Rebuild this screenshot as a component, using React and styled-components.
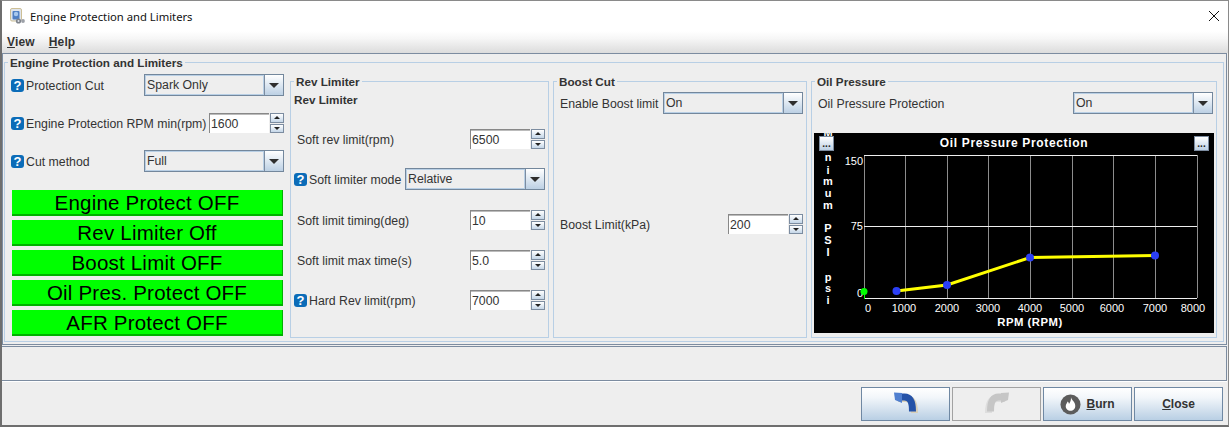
import React from "react";
import styled, { createGlobalStyle } from "styled-components";

const Global = createGlobalStyle`
  html, body { margin: 0; padding: 0; background: #eeeeee; }
  body { width: 1229px; height: 427px; overflow: hidden; font-family: "Liberation Sans", Arial, sans-serif; font-size: 12.3px; color: #333; }
  * { box-sizing: border-box; }
`;

const Win = styled.div`
  width: 1229px; height: 427px; display: flex; flex-direction: column;
  border-left: 2px solid #6e6e6e; border-right: 1px solid #8a8a8a; border-bottom: 2px solid #6e6e6e; border-top: 1px solid #8a8a8a;
  background: #eeeeee;
`;
const TitleBar = styled.div`
  height: 30px; flex: none; background: #fff; display: flex; align-items: center; padding: 0 9px 0 7px; gap: 5px;
`;
const TitleText = styled.span`
  font-family: "Noto Sans", "Open Sans", sans-serif; font-size: 11.25px; color: #111; flex: 1;
`;
const MenuBar = styled.div`
  height: 22px; flex: none; display: flex; align-items: center; gap: 14px; padding: 0 0 1px 5px;
  background: linear-gradient(#ffffff 0%, #f6f6f6 35%, #dcdcdc 100%);
`;
const MenuItem = styled.span`
  font-weight: 700; font-size: 12px; letter-spacing: .15px; color: #333;
  u { text-decoration: underline; }
`;
const MainPanel = styled.div`
  height: 292px; flex: none; margin-right: 1px; border: 1px solid #7c8ca0; padding: 1px 1px 0 1px;
`;
const Group = styled.fieldset`
  margin: 0 ${p => p.$gap || 0}px 0 0; padding: 0; min-width: 0; flex: none; border: 1px solid #b8cfe5; width: ${p => p.$w}px; height: ${p => p.$h}px;
`;
const Legend = styled.legend`
  margin-left: 3px; padding: 0 2px; height: 14px; font-weight: 700; font-size: 11.7px; line-height: 16px; color: #333;
`;
const Columns = styled.div`
  display: flex; padding: 5px 0 0 7px;
`;
const LeftCol = styled.div`
  width: 272px; margin-right: 6px; flex: none; display: flex; flex-direction: column;
`;
const GroupBody = styled.div`
  display: flex; flex-direction: column; padding: ${p => p.$pad};
`;
const Row = styled.div`
  display: flex; align-items: center; flex: none; height: ${p => p.$h || 22}px; margin-top: ${p => p.$top || 0}px; margin-left: ${p => p.$left || 0}px; margin-right: ${p => p.$right || 0}px;
`;
const Label = styled.span`
  flex: 1; white-space: nowrap; color: #333; line-height: 14px; padding-top: 1px;
`;
const Heading = styled.div`
  font-weight: 700; font-size: 11.7px; line-height: 14px; height: 14px; color: #333;
`;
const Help = styled.span`
  width: 13px; height: 13px; flex: none; margin: 0 2px 0 -1px; border-radius: 3px; background: #0b6cb8; color: #fff; font-weight: 700; font-size: 13px; line-height: 13px; text-align: center;
`;
const Combo = styled.div`
  width: 140px; height: 22px; flex: none; display: flex; border: 1px solid #73879c; background: #eeeeee;
`;
const ComboText = styled.div`
  flex: 1; border: 1px solid #b8cfe5; padding-left: 1px; line-height: 18px; color: #333;
`;
const ComboArrow = styled.div`
  width: 19px; flex: none; border-left: 1px solid #7c8ca0; background: linear-gradient(#ffffff, #bcd0e4); display: flex; align-items: center; justify-content: center;
  &::after { content: ""; border-left: 5px solid transparent; border-right: 5px solid transparent; border-top: 5px solid #2e2e2e; }
`;
const Spinner = styled.div`
  display: flex; flex: none; height: 20px; gap: 1px;
`;
const SpinInput = styled.div`
  width: 60px; background: #fff; border-top: 1px solid #888; border-left: 1px solid #888; padding-left: 1px; line-height: 20px; color: #333;
  box-shadow: inset 0 1px 0 #bbb;
`;
const SpinButtons = styled.div`
  width: 14px; display: flex; flex-direction: column; gap: 1px;
`;
const SpinBtn = styled.div`
  flex: 1; border: 1px solid #7c8ca0; background: linear-gradient(#ffffff, #c4d6e8); display: flex; align-items: center; justify-content: center;
  &::after { content: ""; border-left: 3px solid transparent; border-right: 3px solid transparent;
    ${p => p.$up ? "border-bottom: 3px solid #222;" : "border-top: 3px solid #222;"} }
`;
const StatusButtons = styled.div`
  display: flex; flex-direction: column; gap: 4px; margin: 18px 1px 0 0;
`;
const StatusBtn = styled.div`
  height: 26px; background: #00ff00; border-bottom: 2px solid #00b000; border-right: 1px solid #00b000; color: #000; font-size: 20.5px; letter-spacing: .2px; line-height: 26px; text-align: center;
`;
const Chart = styled.div`
  position: relative; width: 400px; height: 200px; margin-top: 19px; background: #000; overflow: hidden;
  svg { display: block; }
`;
const Dots = styled.div`
  position: absolute; top: 3px; ${p => p.$right ? "right: 5px;" : "left: 5px;"} width: 15px; height: 15px; background: linear-gradient(#fff, #bcd0e4); border: 1px solid #7c8ca0; color: #222; font-size: 10px; font-weight: 700; line-height: 13px; text-align: center;
`;
const StatusPanel = styled.div`
  height: 35px; flex: none; margin-top: 1px; margin-right: 1px; border: 1px solid #7c8ca0; border-left: none;
  box-shadow: 0 1px 0 #fff;
`;
const Footer = styled.div`
  flex: none; display: flex; justify-content: flex-end; gap: 2px; margin-top: 6px; padding-right: 5px;
`;
const Btn = styled.div`
  width: 89px; height: 34px; display: flex; align-items: center; justify-content: center; gap: 5px;
  border: 1px solid ${p => p.$off ? "#a2a2a2" : "#6f88a3"};
  background: ${p => p.$off ? "#eeeeee" : "linear-gradient(#ffffff, #f2f6fa 30%, #b9cfe4)"};
  font-weight: 700; font-size: 12px; color: #333;
  u { text-decoration: underline; }
`;

const HelpIcon = () => <Help>?</Help>;
const Sel = ({ v }) => <Combo><ComboText>{v}</ComboText><ComboArrow /></Combo>;
const Spin = ({ v }) => (
  <Spinner>
    <SpinInput>{v}</SpinInput>
    <SpinButtons><SpinBtn $up /><SpinBtn /></SpinButtons>
  </Spinner>
);

const AppIcon = () => (
  <svg width="16" height="16" viewBox="0 0 16 16">
    <rect x="1.5" y="0.5" width="11" height="12.5" rx="1.5" fill="#dfe4ec" stroke="#cdbf95" />
    <rect x="3.5" y="3" width="7" height="8.5" rx="1" fill="#4f7fc4" />
    <circle cx="7" cy="6" r="2.2" fill="#a8c8ee" />
    <circle cx="9.5" cy="13" r="2.6" fill="#7f848c" />
    <circle cx="9.5" cy="13" r="1" fill="#dfe4ec" />
    <circle cx="14" cy="13" r="1.9" fill="#9da1a8" />
  </svg>
);
const CloseIcon = () => (
  <svg width="10" height="10" viewBox="0 0 10 10"><path d="M0 0L10 10M10 0L0 10" stroke="#111" strokeWidth="1" /></svg>
);
const UndoIcon = ({ color = "#2452a8", shadow = "#d8cfb8", flip }) => (
  <svg width="24" height="24" viewBox="0 0 24 24" style={flip ? { transform: "scaleX(-1)" } : undefined}>
    <path d="M3 5.5H11C16.5 5.5 19.5 9.5 19.5 20" fill="none" stroke={shadow} strokeWidth="7" transform="translate(1 1)" />
    <path d="M4 5H10.5C16 5 18.5 9 18.5 19.5" fill="none" stroke={color} strokeWidth="7" />
    <path d="M0 .5L8 1V11L1 8Z" fill={flip ? color : "#4f7fd0"} />
  </svg>
);
const BurnIcon = () => (
  <svg width="21" height="21" viewBox="0 0 22 22">
    <circle cx="11" cy="11" r="10.5" fill="#5c5c5c" />
    <path d="M11.5 3.5C12.5 7 16 8.5 16 12.5C16 15.5 13.8 17.5 11 17.5C8.2 17.5 6 15.5 6 12.8C6 10.5 7.5 9.5 8 7.8C9 8.5 9.3 9.5 9.4 10.4C10.8 8.8 11.7 6.5 11.5 3.5Z" fill="#fff" />
  </svg>
);

const xs = [0, 1000, 2000, 3000, 4000, 5000, 6000, 7000, 8000];
const gridX = [50, 91, 133, 174, 216, 258, 299, 341, 383];
const tickX = [54, 90, 133, 174, 216, 258, 298, 341, 379];
const pts = [[82.5, 158], [133, 152], [216, 124.5], [341, 122.5]];
const yLetters = [["M", 0], ["i", 12], ["n", 24], ["i", 37], ["m", 48], ["u", 60], ["m", 72], ["P", 95], ["S", 107], ["I", 119], ["p", 144], ["s", 155], ["i", 167]];

const ChartSvg = () => (
  <svg width="400" height="200" viewBox="0 0 400 200" fontFamily="'Liberation Sans', Arial, sans-serif" fill="#fff">
    {gridX.map(x => <line key={x} x1={x + .5} x2={x + .5} y1="22" y2="165" stroke="#8c8c8c" />)}
    <line x1="50" x2="383" y1="22.5" y2="22.5" stroke="#eee" />
    <line x1="50" x2="383" y1="93.5" y2="93.5" stroke="#eee" />
    <line x1="50" x2="383" y1="165.5" y2="165.5" stroke="#eee" />
    <text x="200" y="14" textAnchor="middle" fontWeight="700" fontSize="12" letterSpacing=".65">Oil Pressure Protection</text>
    <text x="49" y="32" textAnchor="end" fontSize="11">150</text>
    <text x="49" y="97" textAnchor="end" fontSize="11">75</text>
    <text x="49" y="164" textAnchor="end" fontSize="11">0</text>
    {xs.map((v, i) => <text key={v} x={tickX[i]} y="179" textAnchor="middle" fontSize="11">{v}</text>)}
    <text x="216" y="193" textAnchor="middle" fontWeight="700" fontSize="11.3" letterSpacing=".5">RPM (RPM)</text>
    {yLetters.map(([c, y], i) => <text key={i} x="14" y={y + 4} textAnchor="middle" fontSize="11" fontWeight="700">{c}</text>)}
    <line x1="50.5" x2="50.5" y1="158" y2="166" stroke="#00ff00" />
    <circle cx="50" cy="158.5" r="3.5" fill="#00ff00" />
    <polyline points={pts.map(p => p.join(",")).join(" ")} fill="none" stroke="#ffff00" strokeWidth="3" />
    {pts.map(([x, y]) => <circle key={x} cx={x} cy={y} r="4" fill="#2b3ff5" />)}
  </svg>
);

export default function App() {
  return (
    <>
      <Global />
      <Win>
        <TitleBar>
          <AppIcon />
          <TitleText>Engine Protection and Limiters</TitleText>
          <CloseIcon />
        </TitleBar>
        <MenuBar>
          <MenuItem><u>V</u>iew</MenuItem>
          <MenuItem><u>H</u>elp</MenuItem>
        </MenuBar>
        <MainPanel>
          <Group $w={1220} $h={287}>
            <Legend>Engine Protection and Limiters</Legend>
            <Columns>
              <LeftCol>
                <Row><HelpIcon /><Label>Protection Cut</Label><Sel v="Spark Only" /></Row>
                <Row $h={20} $top={17}><HelpIcon /><Label>Engine Protection RPM min(rpm)</Label><Spin v="1600" /></Row>
                <Row $top={17}><HelpIcon /><Label>Cut method</Label><Sel v="Full" /></Row>
                <StatusButtons>
                  <StatusBtn>Engine Protect OFF</StatusBtn>
                  <StatusBtn>Rev Limiter Off</StatusBtn>
                  <StatusBtn>Boost Limit OFF</StatusBtn>
                  <StatusBtn>Oil Pres. Protect OFF</StatusBtn>
                  <StatusBtn>AFR Protect OFF</StatusBtn>
                </StatusButtons>
              </LeftCol>
              <Group $w={259} $h={264} $gap={4}>
                <Legend>Rev Limiter</Legend>
                <GroupBody $pad="5px 3px 0 3px">
                  <Heading>Rev Limiter</Heading>
                  <Row $h={20} $top={22} $left={3}><Label>Soft rev limit(rpm)</Label><Spin v="6500" /></Row>
                  <Row $top={19} $left={1}><HelpIcon /><Label>Soft limiter mode</Label><Sel v="Relative" /></Row>
                  <Row $h={20} $top={20} $left={3}><Label>Soft limit timing(deg)</Label><Spin v="10" /></Row>
                  <Row $h={20} $top={20} $left={3}><Label>Soft limit max time(s)</Label><Spin v="5.0" /></Row>
                  <Row $h={20} $top={20} $left={1}><HelpIcon /><Label>Hard Rev limit(rpm)</Label><Spin v="7000" /></Row>
                </GroupBody>
              </Group>
              <Group $w={254} $h={264} $gap={4}>
                <Legend>Boost Cut</Legend>
                <GroupBody $pad="4px 3px 0 6px">
                  <Row><Label>Enable Boost limit</Label><Sel v="On" /></Row>
                  <Row $h={20} $top={100}><Label>Boost Limit(kPa)</Label><Spin v="200" /></Row>
                </GroupBody>
              </Group>
              <Group $w={406} $h={264}>
                <Legend>Oil Pressure</Legend>
                <GroupBody $pad="4px 2px 0 2px">
                  <Row $left={4} $right={1}><Label>Oil Pressure Protection</Label><Sel v="On" /></Row>
                  <Chart>
                    <ChartSvg />
                    <Dots>...</Dots>
                    <Dots $right>...</Dots>
                  </Chart>
                </GroupBody>
              </Group>
            </Columns>
          </Group>
        </MainPanel>
        <StatusPanel />
        <Footer>
          <Btn><UndoIcon /></Btn>
          <Btn $off><UndoIcon color="#c6c6c6" shadow="#dedede" flip /></Btn>
          <Btn><BurnIcon /><span><u>B</u>urn</span></Btn>
          <Btn><span><u>C</u>lose</span></Btn>
        </Footer>
      </Win>
    </>
  );
}
